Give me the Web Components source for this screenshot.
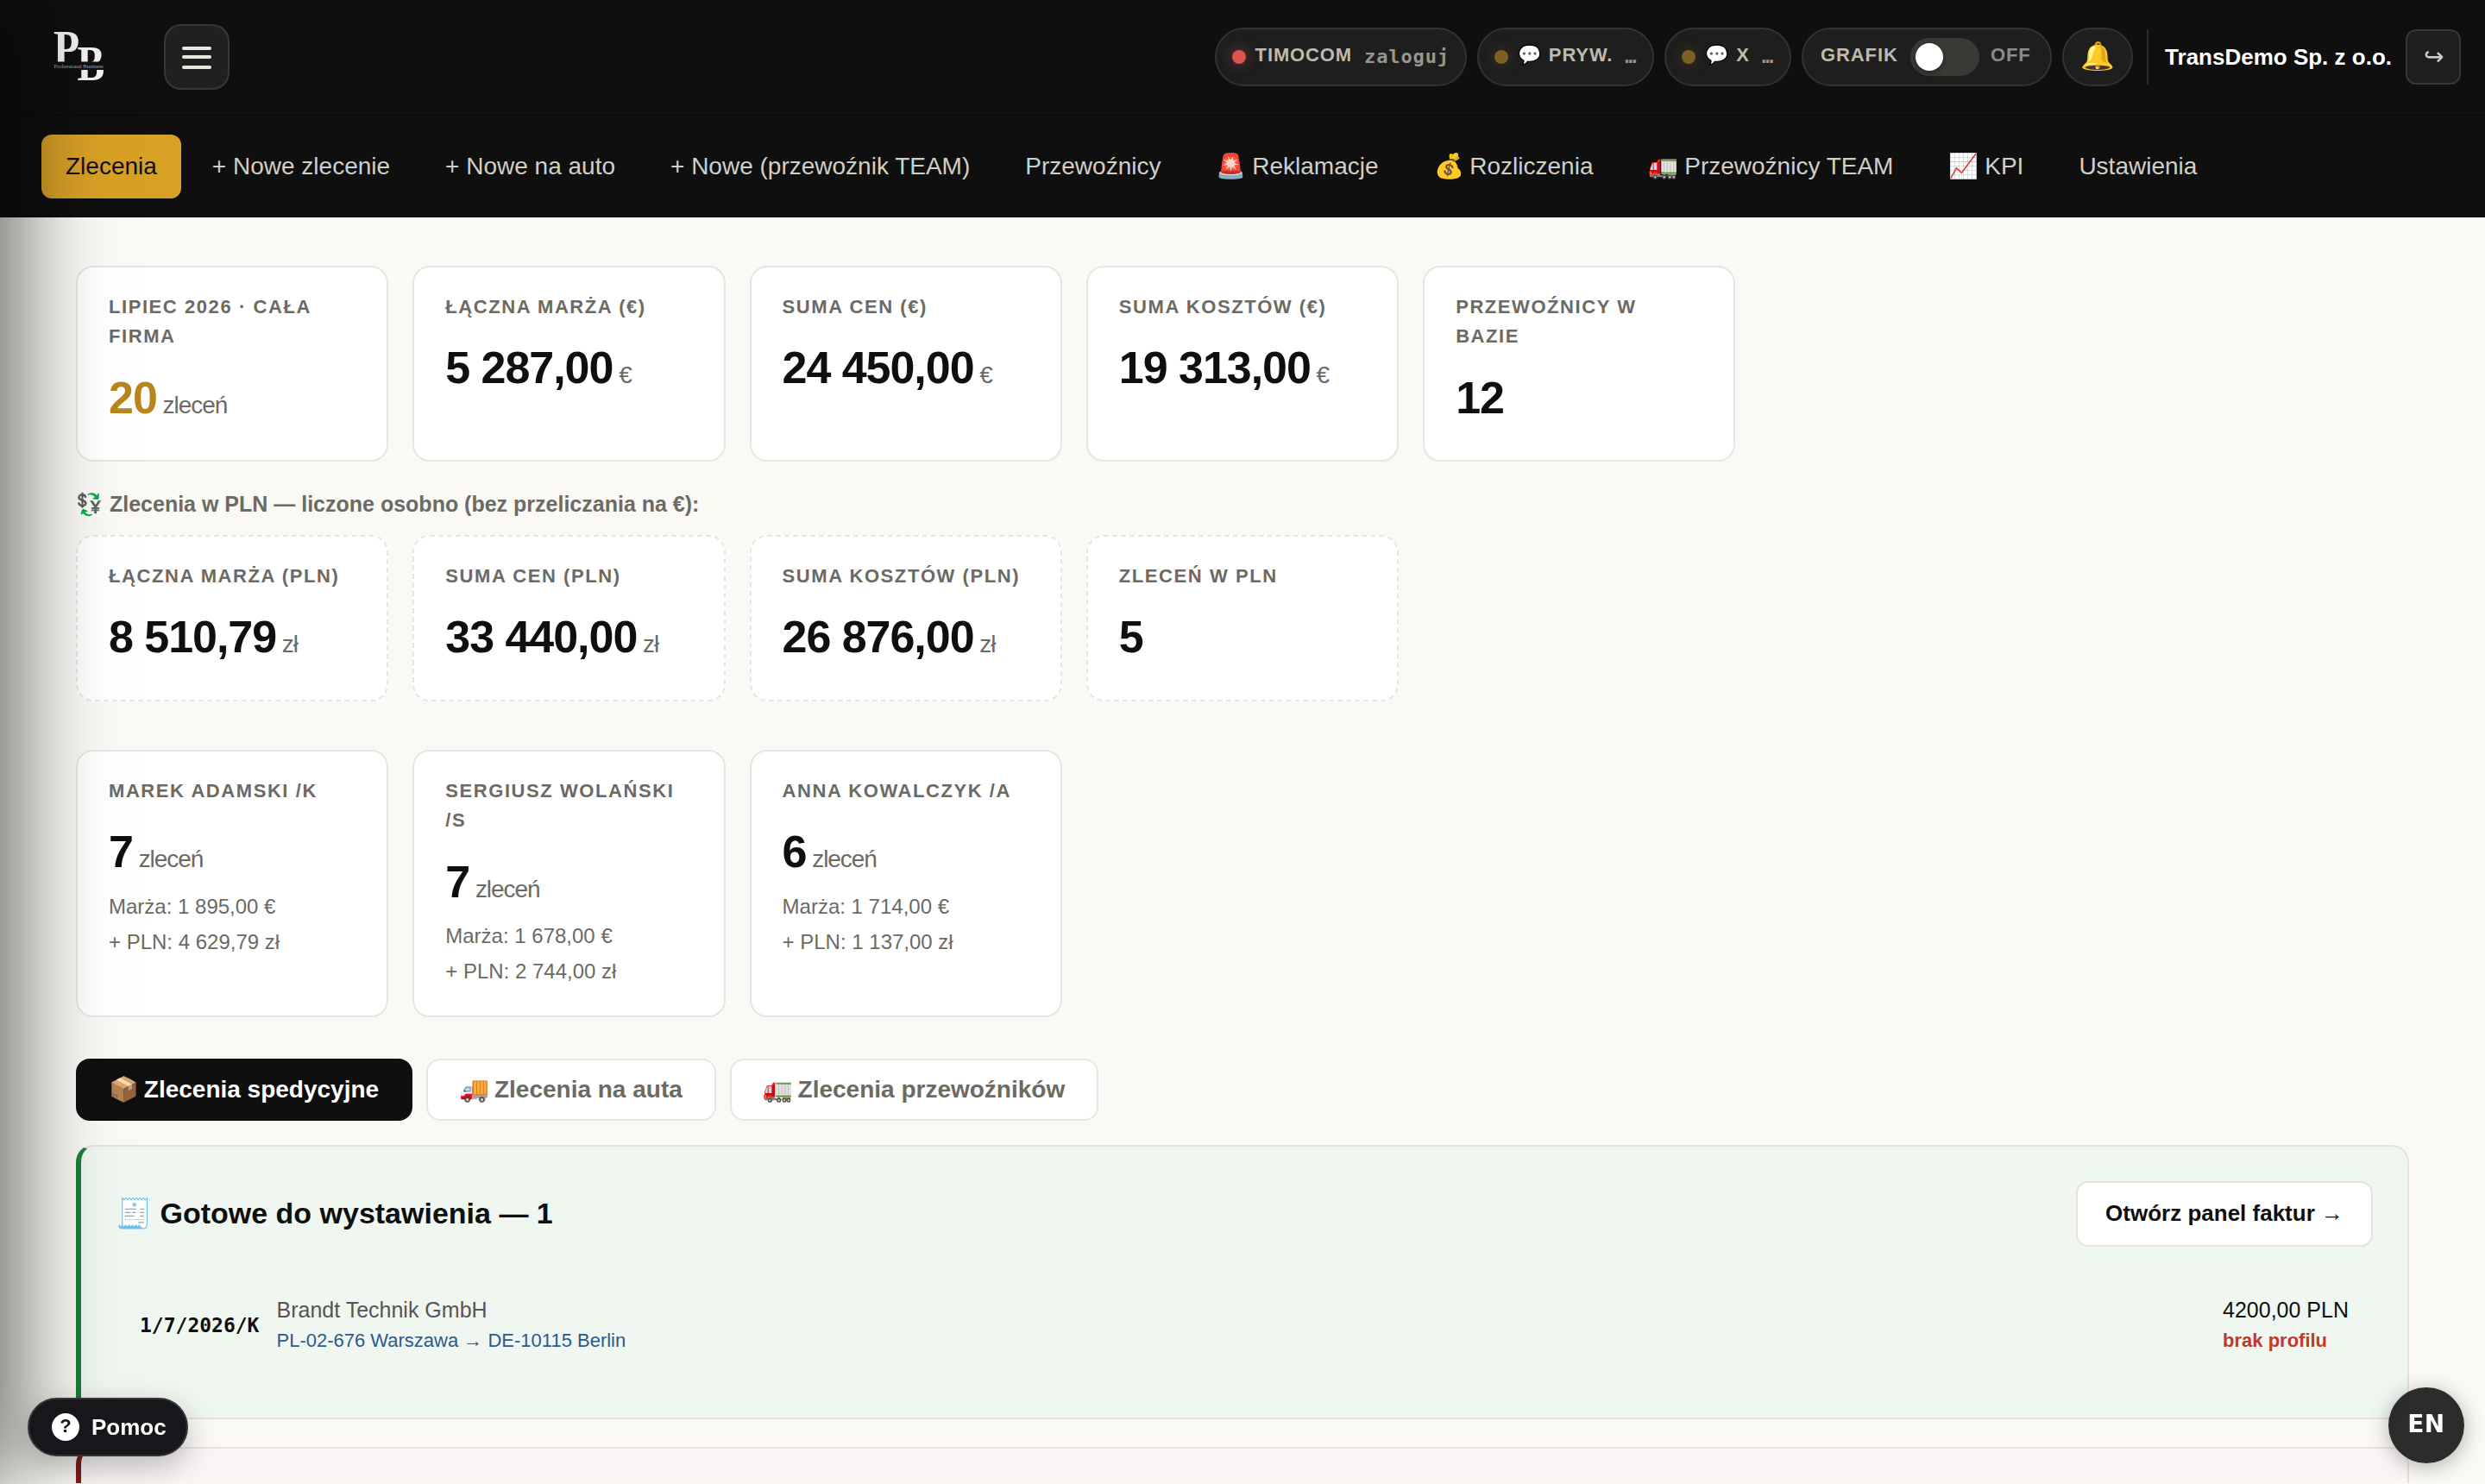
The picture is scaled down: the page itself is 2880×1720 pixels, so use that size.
<!DOCTYPE html>
<html lang="pl">
<head>
<meta charset="utf-8">
<title>Zlecenia</title>
<style>
    :root {
        --ink: #0f0f0f;
        --muted: #6b6a63;
        --line: #e8e6df;
        --paper: #faf9f5;
        --gold: #d8a126;
        --sans: "Liberation Sans", Arial, sans-serif;
        --mono: "DejaVu Sans Mono", monospace;
    }
    html, body {
        margin: 0;
        height: 1720px;
        overflow: hidden;
        background: var(--paper);
    }
    body {
        font-family: var(--sans);
        font-size: 28px;
        line-height: 1.55;
        color: var(--ink);
    }
</style>
</head>
<body>
<orders-app></orders-app>

<script>
class BaseElement extends HTMLElement {
    constructor() {
        super();
        const template = document.createElement('template');
        template.innerHTML = this.constructor.markup;
        this.attachShadow({mode: 'open'}).appendChild(template.content.cloneNode(true));
    }
}

// Inline emoji, --emoji-nudge trims the advance of the colour glyph
class EmojiMark extends BaseElement {
    static markup = `
        <style>
            :host { display: inline; margin-right: var(--emoji-nudge, 0px); }
        </style>
        <slot></slot>
    `;
}

class BrandLogo extends BaseElement {
    static markup = `
        <style>
            :host { display: block; width: 62px; height: 60px; }
            svg { display: block; overflow: visible; }
            text { font-family: "Liberation Serif", serif; fill: #f4f3f1; }
            .letter { font-weight: 700; }
        </style>
        <svg width="62" height="60" viewBox="0 0 62 60">
            <text class="letter" transform="translate(2 39) scale(.85 1)" font-size="58">P</text>
            <text class="letter" transform="translate(29.5 56.5) scale(.82 1)" font-size="58">B</text>
            <rect x="0" y="35.5" width="62" height="9.5" fill="#0f0f0f"/>
            <text x="2.5" y="43" font-size="6.6" textLength="57" style="fill:#a9a9a9">Professional Business</text>
        </svg>
    `;
}

class MenuButton extends BaseElement {
    static markup = `
        <style>
            :host {
                box-sizing: border-box;
                display: flex;
                align-items: center;
                justify-content: center;
                width: 76px;
                height: 76px;
                background: #202020;
                border: 2px solid #383838;
                border-radius: 20px;
            }
        </style>
        <svg width="34" height="24" viewBox="0 0 34 24" fill="#e8e6df" overflow="visible">
            <rect width="34" height="4" rx="2"/>
            <rect y="10" width="34" height="4" rx="2"/>
            <rect y="22" width="34" height="4" rx="2"/>
        </svg>
    `;
}

class StatusPill extends BaseElement {
    static markup = `
        <style>
            :host {
                --emoji-nudge: 1px;
                box-sizing: border-box;
                display: flex;
                align-items: center;
                gap: 10px;
                height: 68px;
                padding: 0 18px;
                background: #1e1e1e;
                border: 2px solid #333;
                border-radius: 34px;
                font-size: 22px;
                font-weight: 700;
                letter-spacing: .04em;
                white-space: nowrap;
                color: #bdbab0;
            }
            .dot {
                width: 16px;
                height: 16px;
                margin-right: 1px;
                border-radius: 50%;
                background: #7d6024;
                box-shadow: 0 0 16px rgba(125, 96, 36, .4);
            }
            :host([tone="red"]) .dot {
                background: #d9534f;
                box-shadow: 0 0 16px rgba(217, 83, 79, .5);
            }
            .label { position: relative; top: -2px; }
            .state {
                margin-left: 4px;
                font-family: var(--mono);
                color: #99968b;
            }
        </style>
        <span class="dot"></span>
        <span class="label"><slot></slot></span>
        <span class="state"><slot name="state"></slot></span>
    `;
}

class SchedulePill extends BaseElement {
    static markup = `
        <style>
            :host {
                box-sizing: border-box;
                display: flex;
                align-items: center;
                width: 290px;
                height: 68px;
                padding: 0 18px 0 20px;
                background: #1e1e1e;
                border: 2px solid #333;
                border-radius: 34px;
                font-size: 22px;
                font-weight: 700;
                letter-spacing: .04em;
                color: #bdbab0;
            }
            .label { width: 104px; }
            .label, .state { position: relative; top: -2px; }
            .track {
                box-sizing: border-box;
                width: 80px;
                height: 44px;
                padding: 6px;
                border-radius: 22px;
                background: #3a3a34;
            }
            .knob {
                width: 32px;
                height: 32px;
                border-radius: 50%;
                background: #fff;
                box-shadow: 0 2px 6px rgba(0, 0, 0, .4);
            }
            .state { margin-left: 13px; color: #8f8c82; }
        </style>
        <span class="label">GRAFIK</span>
        <div class="track"><div class="knob"></div></div>
        <span class="state">OFF</span>
    `;
}

class TopBar extends BaseElement {
    static markup = `
        <style>
            :host {
                box-sizing: border-box;
                display: flex;
                align-items: center;
                height: 134px;
                padding: 0 28px 0 60px;
                background: #0f0f0f;
                border-bottom: 2px solid #0b0b0b;
            }
            menu-button { margin-left: 68px; }
            .tools {
                display: flex;
                align-items: center;
                gap: 12px;
                margin-left: auto;
            }
            .bell {
                box-sizing: border-box;
                display: flex;
                align-items: center;
                justify-content: center;
                width: 82px;
                height: 68px;
                background: #1e1e1e;
                border: 2px solid #333;
                border-radius: 34px;
                font-size: 32px;
            }
            .bell span { margin: 0 -2px; }
            .user {
                display: flex;
                align-items: center;
                height: 64px;
                margin-left: 4px;
                padding-left: 19px;
                border-left: 2px solid #2c2c2c;
                font-size: 26px;
                font-weight: 700;
                color: #fff;
            }
            .logout {
                box-sizing: border-box;
                display: flex;
                align-items: center;
                justify-content: center;
                width: 64px;
                height: 64px;
                margin-left: 4px;
                background: #1e1e1e;
                border: 2px solid #383838;
                border-radius: 12px;
                font-size: 28px;
                color: #d0cdc4;
            }
        </style>
        <brand-logo></brand-logo>
        <menu-button></menu-button>
        <div class="tools">
            <status-pill tone="red">TIMOCOM<span slot="state">zaloguj</span></status-pill>
            <status-pill><emoji-mark>💬</emoji-mark> PRYW.<span slot="state">…</span></status-pill>
            <status-pill><emoji-mark>💬</emoji-mark> X<span slot="state">…</span></status-pill>
            <schedule-pill></schedule-pill>
            <div class="bell"><span>🔔</span></div>
            <div class="user">TransDemo Sp. z o.o.</div>
            <div class="logout">↪</div>
        </div>
    `;
}

class NavItem extends BaseElement {
    static markup = `
        <style>
            :host {
                --emoji-nudge: -1px;
                display: flex;
                align-items: center;
                height: 74px;
                padding: 0 28px;
                border-radius: 12px;
                font-size: 28px;
                white-space: nowrap;
                color: #d0cfca;
            }
            :host([active]) {
                background: var(--gold);
                color: #0f0f0f;
            }
        </style>
        <span><slot></slot></span>
    `;
}

class MainNav extends BaseElement {
    static markup = `
        <style>
            :host {
                box-sizing: border-box;
                display: flex;
                gap: 8px;
                height: 118px;
                padding: 22px 48px;
                background: #0f0f0f;
            }
        </style>
        <nav-item active>Zlecenia</nav-item>
        <nav-item>+ Nowe zlecenie</nav-item>
        <nav-item>+ Nowe na auto</nav-item>
        <nav-item>+ Nowe (przewoźnik TEAM)</nav-item>
        <nav-item>Przewoźnicy</nav-item>
        <nav-item><emoji-mark>🚨</emoji-mark> Reklamacje</nav-item>
        <nav-item><emoji-mark>💰</emoji-mark> Rozliczenia</nav-item>
        <nav-item><emoji-mark>🚛</emoji-mark> Przewoźnicy TEAM</nav-item>
        <nav-item><emoji-mark>📈</emoji-mark> KPI</nav-item>
        <nav-item>Ustawienia</nav-item>
    `;
}

class StatGrid extends BaseElement {
    static markup = `
        <style>
            :host {
                display: grid;
                grid-template-columns: repeat(7, 1fr);
                gap: 28px;
            }
        </style>
        <slot></slot>
    `;
}

class StatCard extends BaseElement {
    static markup = `
        <style>
            :host {
                box-sizing: border-box;
                display: block;
                padding: 29px 36px 32px;
                background: #fff;
                border: 2px solid var(--line);
                border-radius: 20px;
            }
            :host([dashed]) { border-style: dashed; }
            .label {
                margin-bottom: 13.4px;
                font-size: 22px;
                font-weight: 700;
                letter-spacing: 1.57px;
                color: var(--muted);
            }
            .value {
                font-size: 52px;
                font-weight: 700;
                letter-spacing: -.02em;
                white-space: nowrap;
            }
            .value small {
                font-size: 28px;
                font-weight: 400;
                color: var(--muted);
            }
            :host([accent]) .value b { color: #b8861b; }
            ::slotted(p) {
                margin: 4px 0 0;
                font-size: 24px;
                color: var(--muted);
            }
        </style>
        <div class="label"></div>
        <div class="value"><b></b><small></small></div>
        <slot></slot>
    `;

    connectedCallback() {
        const unit = this.getAttribute('unit');
        this.shadowRoot.querySelector('.label').textContent = this.getAttribute('label');
        this.shadowRoot.querySelector('b').textContent = this.getAttribute('value');
        this.shadowRoot.querySelector('small').textContent = unit ? ' ' + unit : '';
    }
}

class TabButton extends BaseElement {
    static markup = `
        <style>
            :host {
                --emoji-nudge: -2px;
                box-sizing: border-box;
                display: flex;
                align-items: center;
                height: 72px;
                padding: 0 37px 0 36px;
                background: #fff;
                border: 2px solid var(--line);
                border-radius: 16px;
                font-size: 28px;
                font-weight: 700;
                white-space: nowrap;
                color: var(--muted);
            }
            :host([active]) {
                background: #0f0f0f;
                border-color: #0f0f0f;
                color: #fff;
            }
        </style>
        <span><slot></slot></span>
    `;
}

class AlertPanel extends BaseElement {
    static markup = `
        <style>
            :host {
                box-sizing: border-box;
                display: block;
                height: 318px;
                padding: 40px;
                background: #f0f7f1;
                border: 2px solid #e8e2da;
                border-left: 6px solid #1b7f3b;
                border-radius: 20px;
            }
            :host([tone="red"]) {
                background: #fbf5f5;
                border-left-color: #7f1d1d;
            }
            header {
                display: flex;
                align-items: center;
                justify-content: space-between;
                height: 76px;
                font-size: 34px;
                font-weight: 700;
            }
        </style>
        <header>
            <slot name="title"></slot>
            <slot name="action"></slot>
        </header>
        <slot></slot>
    `;
}

class LinkButton extends BaseElement {
    static markup = `
        <style>
            :host {
                box-sizing: border-box;
                display: flex;
                align-items: center;
                height: 76px;
                padding: 0 32px;
                background: #fff;
                border: 2px solid #e8e2da;
                border-radius: 14px;
                font-size: 26px;
                font-weight: 700;
            }
        </style>
        <span><slot></slot></span>
    `;
}

class InvoiceRow extends BaseElement {
    static markup = `
        <style>
            :host {
                display: flex;
                align-items: center;
                margin-top: 54px;
                padding: 0 28px;
                font-size: 25px;
            }
            .number {
                width: 158.5px;
                padding-top: 2px;
                font: 700 23px var(--mono);
            }
            .client { color: #555; }
            .route { font-size: 22px; color: #2a5a8c; }
            .amount { margin-left: auto; }
            .warning { font-size: 22px; font-weight: 700; color: #c0392b; }
        </style>
        <div class="number"><slot name="number"></slot></div>
        <div>
            <div class="client"><slot name="client"></slot></div>
            <div class="route"><slot name="route"></slot></div>
        </div>
        <div class="amount">
            <div><slot name="amount"></slot></div>
            <div class="warning"><slot name="warning"></slot></div>
        </div>
    `;
}

// Closed drawer: sits off the left edge, only its shadow shows
class SideDrawer extends BaseElement {
    static markup = `
        <style>
            :host {
                position: fixed;
                top: 0;
                left: -560px;
                width: 560px;
                height: 1720px;
                box-shadow: 24px 0 96px rgba(0, 0, 0, .55);
                pointer-events: none;
            }
        </style>
    `;
}

class HelpButton extends BaseElement {
    static markup = `
        <style>
            :host {
                box-sizing: border-box;
                position: fixed;
                left: 32px;
                bottom: 32px;
                display: flex;
                align-items: center;
                gap: 14px;
                height: 68px;
                padding: 0 23px 0 26px;
                background: #17171b;
                border: 2px solid #36363a;
                border-radius: 34px;
                box-shadow: 0 12px 36px rgba(0, 0, 0, .25);
                font-size: 26px;
                font-weight: 700;
                color: #fff;
            }
            .mark {
                width: 32px;
                height: 32px;
                border-radius: 50%;
                background: #fff;
                font-size: 22px;
                line-height: 29px;
                text-align: center;
                color: #17171b;
            }
        </style>
        <span class="mark">?</span>
        <span>Pomoc</span>
    `;
}

class LanguageButton extends BaseElement {
    static markup = `
        <style>
            :host {
                position: fixed;
                right: 24px;
                bottom: 24px;
                display: flex;
                align-items: center;
                justify-content: center;
                width: 88px;
                height: 88px;
                border-radius: 50%;
                background: rgba(15, 15, 15, .88);
                box-shadow: 0 4px 24px rgba(0, 0, 0, .3);
                font: 700 28px "DejaVu Sans", sans-serif;
                letter-spacing: .5px;
                color: #fff;
            }
            span { position: relative; top: -2px; }
        </style>
        <span>EN</span>
    `;
}

class OrdersApp extends BaseElement {
    static markup = `
        <style>
            :host {
                display: block;
                height: 1720px;
                overflow: hidden;
            }
            main { padding: 56px 88px 0; }
            .note {
                --emoji-nudge: 1px;
                margin: 30px 0 16px;
                font-size: 25px;
                font-weight: 700;
                color: var(--muted);
            }
            .people { margin-top: 56px; }
            .tabs {
                display: flex;
                gap: 16px;
                margin: 48px 0 28px;
            }
            alert-panel { margin-bottom: 32px; }
            alert-panel[tone="red"] {
                height: 42px;
                margin: 0;
                padding: 0;
                border-bottom: 0;
                border-bottom-left-radius: 0;
                border-bottom-right-radius: 0;
            }
        </style>
        <top-bar></top-bar>
        <main-nav></main-nav>
        <main>
            <stat-grid>
                <stat-card accent label="LIPIEC 2026 · CAŁA FIRMA" value="20" unit="zleceń"></stat-card>
                <stat-card label="ŁĄCZNA MARŻA (€)" value="5 287,00" unit="€"></stat-card>
                <stat-card label="SUMA CEN (€)" value="24 450,00" unit="€"></stat-card>
                <stat-card label="SUMA KOSZTÓW (€)" value="19 313,00" unit="€"></stat-card>
                <stat-card label="PRZEWOŹNICY W BAZIE" value="12"></stat-card>
            </stat-grid>
            <div class="note"><emoji-mark>💱</emoji-mark> Zlecenia w PLN — liczone osobno (bez przeliczania na €):</div>
            <stat-grid>
                <stat-card dashed label="ŁĄCZNA MARŻA (PLN)" value="8 510,79" unit="zł"></stat-card>
                <stat-card dashed label="SUMA CEN (PLN)" value="33 440,00" unit="zł"></stat-card>
                <stat-card dashed label="SUMA KOSZTÓW (PLN)" value="26 876,00" unit="zł"></stat-card>
                <stat-card dashed label="ZLECEŃ W PLN" value="5"></stat-card>
            </stat-grid>
            <stat-grid class="people">
                <stat-card label="MAREK ADAMSKI /K" value="7" unit="zleceń">
                    <p>Marża: 1 895,00 €</p>
                    <p>+ PLN: 4 629,79 zł</p>
                </stat-card>
                <stat-card label="SERGIUSZ WOLAŃSKI /S" value="7" unit="zleceń">
                    <p>Marża: 1 678,00 €</p>
                    <p>+ PLN: 2 744,00 zł</p>
                </stat-card>
                <stat-card label="ANNA KOWALCZYK /A" value="6" unit="zleceń">
                    <p>Marża: 1 714,00 €</p>
                    <p>+ PLN: 1 137,00 zł</p>
                </stat-card>
            </stat-grid>
            <div class="tabs">
                <tab-button active><emoji-mark>📦</emoji-mark> Zlecenia spedycyjne</tab-button>
                <tab-button><emoji-mark>🚚</emoji-mark> Zlecenia na auta</tab-button>
                <tab-button><emoji-mark>🚛</emoji-mark> Zlecenia przewoźników</tab-button>
            </div>
            <alert-panel>
                <span slot="title">🧾 Gotowe do wystawienia — 1</span>
                <link-button slot="action">Otwórz panel faktur →</link-button>
                <invoice-row>
                    <span slot="number">1/7/2026/K</span>
                    <span slot="client">Brandt Technik GmbH</span>
                    <span slot="route">PL-02-676 Warszawa → DE-10115 Berlin</span>
                    <span slot="amount">4200,00 PLN</span>
                    <span slot="warning">brak profilu</span>
                </invoice-row>
            </alert-panel>
            <alert-panel tone="red"></alert-panel>
        </main>
        <side-drawer></side-drawer>
        <help-button></help-button>
        <language-button></language-button>
    `;
}

customElements.define('emoji-mark', EmojiMark);
customElements.define('brand-logo', BrandLogo);
customElements.define('menu-button', MenuButton);
customElements.define('status-pill', StatusPill);
customElements.define('schedule-pill', SchedulePill);
customElements.define('top-bar', TopBar);
customElements.define('nav-item', NavItem);
customElements.define('main-nav', MainNav);
customElements.define('stat-grid', StatGrid);
customElements.define('stat-card', StatCard);
customElements.define('tab-button', TabButton);
customElements.define('alert-panel', AlertPanel);
customElements.define('link-button', LinkButton);
customElements.define('invoice-row', InvoiceRow);
customElements.define('side-drawer', SideDrawer);
customElements.define('help-button', HelpButton);
customElements.define('language-button', LanguageButton);
customElements.define('orders-app', OrdersApp);
</script>
</body>
</html>
